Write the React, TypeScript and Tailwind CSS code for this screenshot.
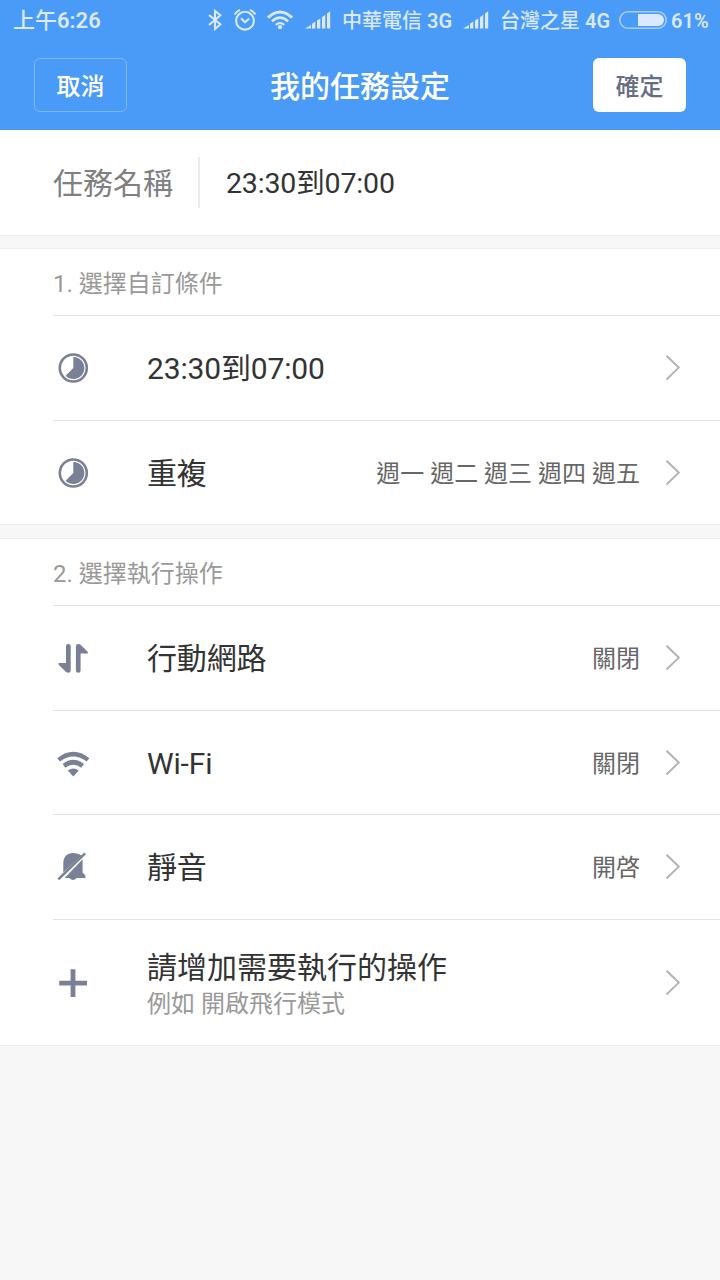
import React from 'react';

interface TaskItem {
    id: string;
    title: string;
    value?: string;
    icon: React.ReactNode;
    height: string;
}

const BluetoothIcon = () => (
    <svg width="14" height="22" viewBox="0 0 14 22" fill="none" className="shrink-0">
        <path d="M1 6L12.4 15.3L7 20V2L12.4 6.3L1 16" stroke="#dbe9fd" strokeWidth="2.1" />
    </svg>
);

const AlarmIcon = () => (
    <svg width="24" height="24" viewBox="0 0 24 24" fill="none" className="ml-[11px] shrink-0">
        <circle cx="12" cy="12.7" r="8.9" stroke="#dbe9fd" strokeWidth="2.1" />
        <path d="M8 10.3L12 14.3L16 10.7" stroke="#dbe9fd" strokeWidth="2" />
        <path d="M1.6 6.6Q3.4 3.4 7 1.9M22.4 6.6Q20.6 3.4 17 1.9" stroke="#dbe9fd" strokeWidth="2" />
    </svg>
);

const StatusWifiIcon = () => (
    <svg width="26" height="20" viewBox="0 0 26 20" fill="none" className="ml-[10px] shrink-0">
        <path d="M1 7.6Q13 -3.6 25 7.6" stroke="#dbe9fd" strokeWidth="2.9" />
        <path d="M5 11.4Q13 4 21 11.4" stroke="#dbe9fd" strokeWidth="2.6" />
        <path d="M8.8 14.8Q13 11.4 17.2 14.8" stroke="#dbe9fd" strokeWidth="2.3" />
        <circle cx="13" cy="17.2" r="2.1" fill="#dbe9fd" />
    </svg>
);

const SignalIcon = () => (
    <svg width="26" height="18" viewBox="0 0 26 18" fill="#dbe9fd" className="shrink-0">
        <path d="M0 17.4L6 14V17.4ZM7 12.8L10.3 10.6V17.4H7ZM12 9.6L15.3 7.4V17.4H12ZM17 6.2L20.3 3.7V17.4H17ZM22 2.4L25.2 0.2V17.4H22Z" />
    </svg>
);

const BatteryIcon = () => (
    <svg width="48" height="18" viewBox="0 0 48 18" fill="none" className="ml-[9px] shrink-0">
        <rect x="0.8" y="0.8" width="46.4" height="16.4" rx="8.2" stroke="#a9cdfb" strokeWidth="1.6" />
        <path d="M19 3H39A6 6 0 0 1 39 15H19Z" fill="#dbe9fd" />
    </svg>
);

const ClockIcon = () => (
    <svg width="40" height="40" viewBox="0 0 40 40" fill="none">
        <circle cx="20.3" cy="20" r="13.5" stroke="#7a8196" strokeWidth="2.6" />
        <path d="M20.3 20V9A11 11 0 1 1 12.6 27.8Z" fill="#7a8196" />
    </svg>
);

const DataIcon = () => (
    <svg width="40" height="40" viewBox="0 0 40 40" fill="#7a8196">
        <path d="M13 8Q13 5.9 15.3 5.9Q17.7 5.9 17.7 8V32.5Q17.7 34.8 15.3 34.8Q14 34.8 13 34L5.7 26.7Q4.6 25 6.2 25H13Z" />
        <path d="M27.6 32.6Q27.6 34.8 25.3 34.8Q22.9 34.8 22.9 32.6V8.2Q22.9 5.9 25.3 5.9Q26.6 5.9 27.6 6.7L34.6 13.7Q35.8 15.6 34.2 15.6H27.6Z" />
    </svg>
);

const WifiIcon = () => (
    <svg width="40" height="40" viewBox="0 0 40 40" fill="#7a8196">
        <path d="M4.2 15.2Q20.3 2.4 36.4 15.2L33.6 18.6Q20.3 8.4 7 18.6Z" />
        <path d="M9.6 21.1Q20.3 12.6 31 21.1L28.3 24.7Q20.3 18.8 12.3 24.7Z" />
        <path d="M14.8 27.4Q20.3 23.4 25.8 27.4L20.3 33.6Z" />
    </svg>
);

const MuteIcon = () => (
    <svg width="40" height="40" viewBox="0 0 40 40" fill="none">
        <path d="M10.3 25.6V16C10.3 9.4 14.5 6 20 6C23.4 6 26.4 7 28.6 8.4Z" fill="#7a8196" />
        <path d="M29.6 12.2V25.4L32.4 28.6V31H23.8Q20 34.8 16.2 31H11.6Z" fill="#7a8196" />
        <path d="M5.3 32.4L32.1 6.4" stroke="#7a8196" strokeWidth="2.5" />
    </svg>
);

const PlusIcon = () => (
    <svg width="40" height="40" viewBox="0 0 40 40" fill="none">
        <path d="M6.2 20.2H34M20 6.3V34" stroke="#7a8196" strokeWidth="4.8" />
    </svg>
);

const ChevronIcon = () => (
    <svg width="16" height="26" viewBox="0 0 16 26" fill="none" className="mr-[39px] ml-[25px] shrink-0">
        <path d="M1.5 0.7L13.8 12.6L1.5 24.5" stroke="#b2b2b2" strokeWidth="1.9" />
    </svg>
);

const conditions: TaskItem[] = [
    { id: 'time', title: '23:30到07:00', icon: <ClockIcon />, height: 'h-[105px]' },
    { id: 'repeat', title: '重複', value: '週一 週二 週三 週四 週五', icon: <ClockIcon />, height: 'h-[104px]' },
];

const actions: TaskItem[] = [
    { id: 'data', title: '行動網路', value: '關閉', icon: <DataIcon />, height: 'h-[105px]' },
    { id: 'wifi', title: 'Wi-Fi', value: '關閉', icon: <WifiIcon />, height: 'h-[104px]' },
    { id: 'mute', title: '靜音', value: '開啓', icon: <MuteIcon />, height: 'h-[105px]' },
];

const TaskRow: React.FC<{ item: TaskItem }> = ({ item }) => (
    <div className={`ml-[53px] flex items-center border-t border-[#e2e2e2] ${item.height}`}>
        <div className="w-10 shrink-0">{item.icon}</div>
        <div className="ml-[54px] flex-1 pt-0.5 text-[30px] leading-10 tracking-[-0.15px] text-[#333333]">{item.title}</div>
        {item.value && <div className="pt-0.5 text-2xl text-[#666666]">{item.value}</div>}
        <ChevronIcon />
    </div>
);

const App: React.FC = () => {
    return (
        <div className="min-h-screen w-[720px] bg-[#f7f7f7] font-['Roboto','Noto_Sans_CJK_TC',sans-serif]" lang="zh-Hant">
            <header className="h-[130px] bg-[#4a9af7]">
                <div className="flex h-10 items-center whitespace-nowrap pl-[13px] text-xl font-medium text-[#dbe9fd]">
                    <span className="w-[195px] pt-0.5 text-[22px]">上午<b className="font-semibold">6:26</b></span>
                    <BluetoothIcon />
                    <AlarmIcon />
                    <StatusWifiIcon />
                    <span className="ml-3"><SignalIcon /></span>
                    <span className="ml-[11px] pt-0.5">中華電信 <b className="font-semibold">3G</b></span>
                    <span className="ml-[11px]"><SignalIcon /></span>
                    <span className="ml-[11px] pt-0.5">台灣之星 <b className="font-semibold">4G</b></span>
                    <BatteryIcon />
                    <span className="ml-1 pt-0.5 font-semibold">61%</span>
                </div>
                <div className="flex h-[90px] items-center justify-between px-[34px]">
                    <button className="h-[54px] w-[93px] rounded-md border border-[#7db6fa] pt-[3px] text-2xl font-medium text-white">取消</button>
                    <h1 className="pt-0.5 text-[30px] font-medium text-white">我的任務設定</h1>
                    <button className="h-[54px] w-[93px] rounded-md bg-white pt-[3px] text-2xl font-medium text-[#666e82]">確定</button>
                </div>
            </header>

            <section className="flex h-[106px] items-center border-b border-[#ececec] bg-white pl-[53px] text-[30px]">
                <span className="pt-0.5 text-[#808080]">任務名稱</span>
                <div className="ml-[25px] h-[51px] w-0.5 bg-[#ebebeb]" />
                <span className="ml-[26px] pt-1 text-[28.5px] tracking-[-0.15px] text-[#333333]">23:30到07:00</span>
            </section>

            <section className="mt-3 border-y border-[#ececec] bg-white">
                <h2 className="flex h-[66px] items-center pt-[3px] pl-[53px] text-2xl text-[#999999]">1. 選擇自訂條件</h2>
                {conditions.map((item) => (
                    <TaskRow key={item.id} item={item} />
                ))}
            </section>

            <section className="mt-[13px] border-y border-[#ececec] bg-white">
                <h2 className="flex h-[66px] items-center pt-[3px] pl-[53px] text-2xl text-[#999999]">2. 選擇執行操作</h2>
                {actions.map((item) => (
                    <TaskRow key={item.id} item={item} />
                ))}
                <div className="ml-[53px] flex h-[126px] items-center border-t border-[#e2e2e2]">
                    <div className="w-10 shrink-0"><PlusIcon /></div>
                    <div className="ml-[54px] flex-1 pt-[3px]">
                        <div className="text-[30px] leading-10 text-[#333333]">請增加需要執行的操作</div>
                        <div className="text-2xl text-[#999999]">例如 開啟飛行模式</div>
                    </div>
                    <ChevronIcon />
                </div>
            </section>
        </div>
    );
};

export default App;
